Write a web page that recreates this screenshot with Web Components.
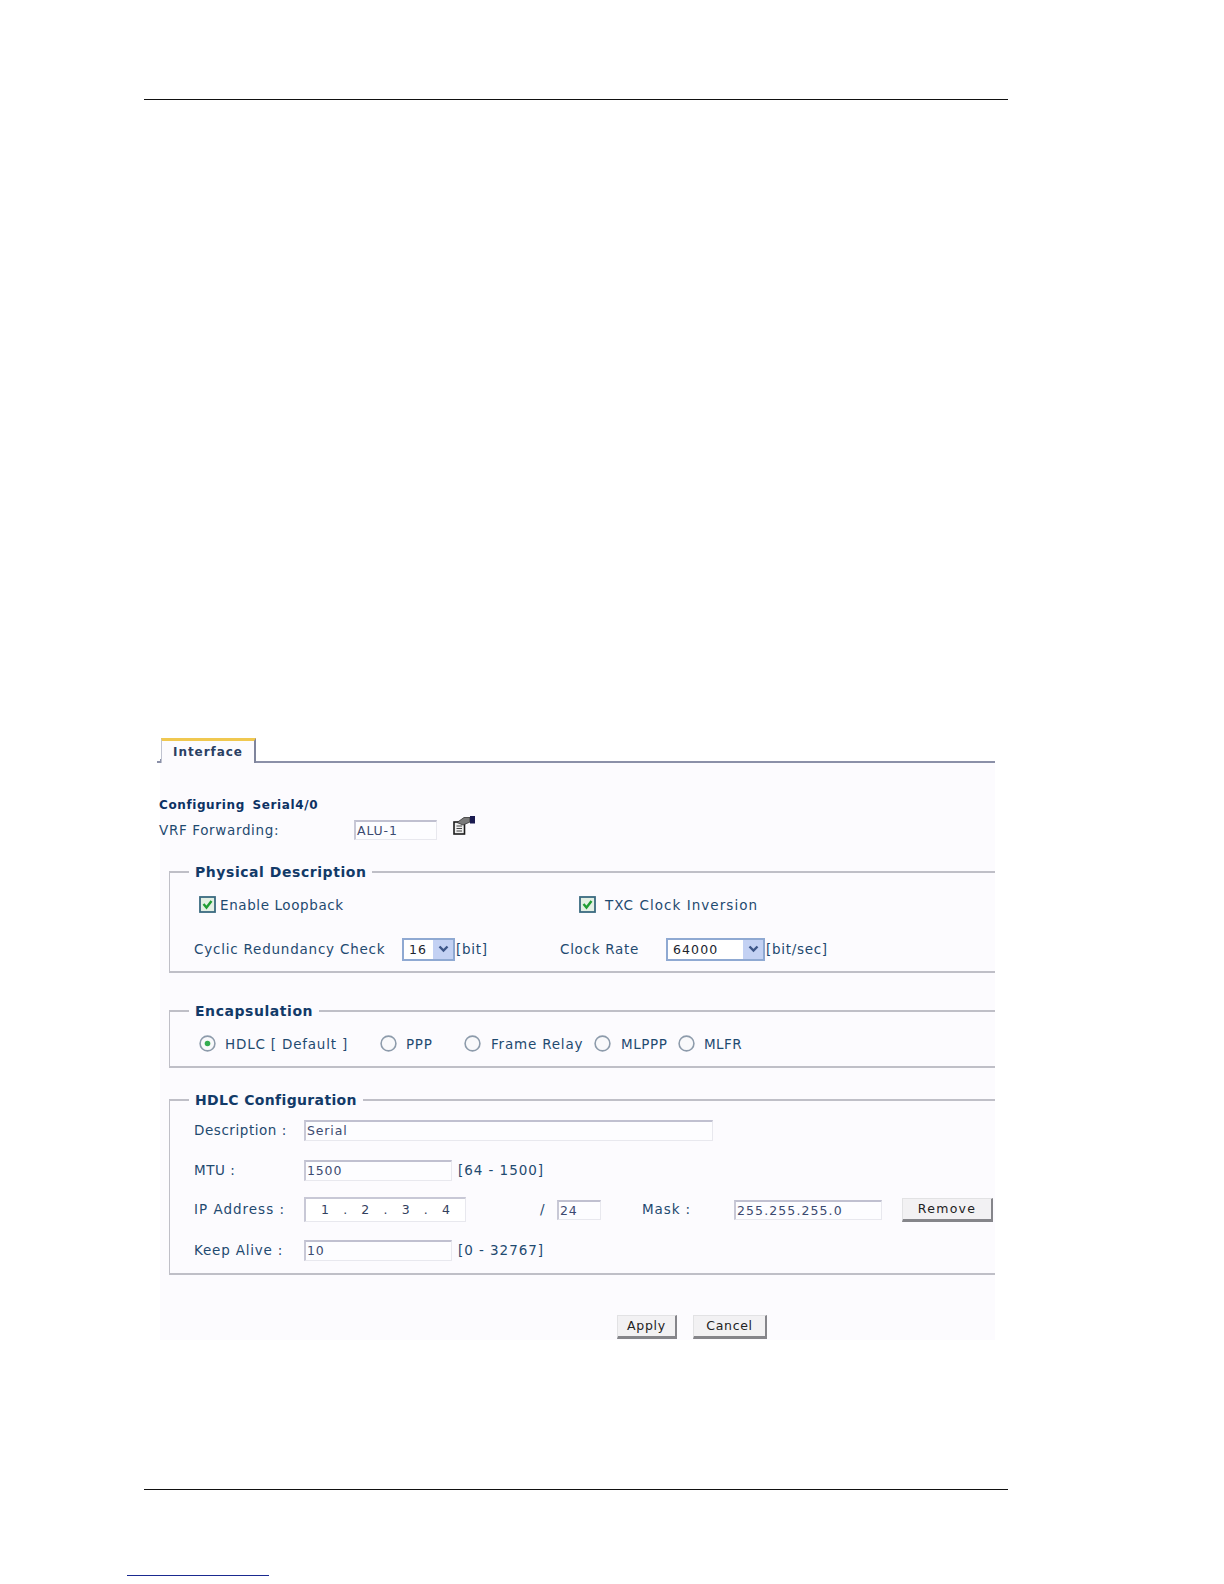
<!DOCTYPE html>
<html>
<head>
<meta charset="utf-8">
<title>Interface</title>
<style>
  html, body { margin: 0; background: #fff; }
  body { font-family: "DejaVu Sans", sans-serif; font-size: 13.5px; color: #1f4a70; }
</style>
</head>
<body>
<doc-page>
  <config-panel>
    <tab-strip label="Interface" slot="tabs"></tab-strip>
    <div style="font-size:12px;font-weight:bold;color:#0d3263;line-height:16px;margin:34px 0 0 -1px;letter-spacing:.6px;word-spacing:3px">Configuring Serial4/0</div>
    <form-row style="margin:5px 0 0 -1px;height:24px">
      <form-label width="195" style="letter-spacing:.65px">VRF Forwarding:</form-label>
      <text-box width="83" height="20">ALU-1</text-box>
      <vrf-icon style="margin:-10px 0 0 16px"></vrf-icon>
    </form-row>

    <form-section legend="Physical Description" pad="10" style="margin-top:20px">
      <form-row style="margin:11px 0 0 29px;height:26px">
        <check-box></check-box>
        <form-label width="359" style="margin-left:4px;letter-spacing:.6px">Enable Loopback</form-label>
        <check-box></check-box>
        <form-label style="margin-left:9px;letter-spacing:1.05px">TXC Clock Inversion</form-label>
      </form-row>
      <form-row style="margin:19px 0 0 24px;height:24px">
        <form-label width="208" style="letter-spacing:.78px">Cyclic Redundancy Check</form-label>
        <select-box width="53">16</select-box>
        <form-label width="104" style="margin-left:1px">[bit]</form-label>
        <form-label width="106" style="letter-spacing:.7px">Clock Rate</form-label>
        <select-box width="99">64000</select-box>
        <form-label style="margin-left:1px">[bit/sec]</form-label>
      </form-row>
    </form-section>

    <form-section legend="Encapsulation" pad="10" style="margin-top:28px">
      <form-row style="margin:12px 0 0 29px;height:24px">
        <radio-box checked></radio-box>
        <form-label width="155" style="margin-left:9px;letter-spacing:.8px">HDLC [ Default ]</form-label>
        <radio-box></radio-box>
        <form-label width="58" style="margin-left:9px">PPP</form-label>
        <radio-box></radio-box>
        <form-label width="103" style="margin-left:10px;letter-spacing:.8px">Frame Relay</form-label>
        <radio-box></radio-box>
        <form-label width="57" style="margin-left:10px;letter-spacing:.55px">MLPPP</form-label>
        <radio-box></radio-box>
        <form-label style="margin-left:9px;letter-spacing:.4px">MLFR</form-label>
      </form-row>
    </form-section>

    <form-section legend="HDLC Configuration" pad="12" legend-spacing=".35" style="margin-top:22px">
      <form-row style="margin:10px 0 0 24px;height:22px">
        <form-label width="110" style="letter-spacing:.55px">Description :</form-label>
        <text-box width="409" height="21">Serial</text-box>
      </form-row>
      <form-row style="margin:18px 0 0 24px;height:22px">
        <form-label width="110" style="letter-spacing:.55px">MTU :</form-label>
        <text-box width="148" height="21">1500</text-box>
        <form-label style="margin-left:6px;letter-spacing:.95px">[64 - 1500]</form-label>
      </form-row>
      <form-row style="margin:15px 0 0 24px;height:26px">
        <form-label width="110" style="letter-spacing:1px">IP Address :</form-label>
        <ip-box></ip-box>
        <form-label width="17" style="margin-left:74px">/</form-label>
        <text-box width="44" height="20" style="margin-top:2px">24</text-box>
        <form-label width="92" style="margin-left:41px;letter-spacing:.9px">Mask :</form-label>
        <text-box width="148" height="20" style="margin-top:2px;letter-spacing:1.1px">255.255.255.0</text-box>
        <push-button width="91" style="margin:2px 0 0 20px;letter-spacing:1.3px">Remove</push-button>
      </form-row>
      <form-row style="margin:17px 0 0 24px;height:22px">
        <form-label width="110" style="letter-spacing:.8px">Keep Alive :</form-label>
        <text-box width="148" height="21">10</text-box>
        <form-label style="margin-left:6px;letter-spacing:.95px">[0 - 32767]</form-label>
      </form-row>
    </form-section>

    <form-row style="margin:40px 0 0 457px;height:24px">
      <push-button width="60">Apply</push-button>
      <push-button width="74" style="margin-left:16px">Cancel</push-button>
    </form-row>
  </config-panel>
</doc-page>

<script>
function define(name, css, html, attrs) {
  customElements.define(name, class extends HTMLElement {
    connectedCallback() {
      if (this.shadowRoot) return;
      this.attachShadow({ mode: 'open' });
      const a = {};
      for (const k of attrs || []) a[k] = this.getAttribute(k);
      this.shadowRoot.innerHTML = `<style>${typeof css === 'function' ? css(a) : css}</style>` +
        (typeof html === 'function' ? html(a) : html);
    }
  });
}

define('doc-page', `
  :host { display: block; width: 864px; margin-left: 144px; }
  .rule { height: 1px; background: #111; }
  .top { margin-top: 99px; }
  .main { margin: 637px 0 0 16px; }
  .bottom { margin-top: 149px; }
  .link { width: 142px; height: 1px; background: #1a2a90; margin: 85px 0 0 -17px; }
  .top, .link { position: static; }
  .wrap { display: flow-root; }
`, `
  <div class="wrap">
    <div class="rule top"></div>
    <div class="main"><slot></slot></div>
    <div class="rule bottom"></div>
    <div class="link"></div>
  </div>
`);

define('config-panel', `
  :host { display: block; width: 835px; height: 603px; background: #fcfbfe; }
`, `<slot name="tabs"></slot><slot></slot>`);

define('tab-strip', `
  :host { display: flex; height: 26px; margin-left: -3px; align-items: flex-end; background: #fff; }
  .lead { width: 4px; height: 4px; border-bottom: 2px solid #8b90a8; border-right: 1px solid #8b90a8; box-sizing: border-box; flex: none; }
  .tab { flex: none; width: 95px; height: 25px; box-sizing: border-box;
    border-top: 3px solid #f0c850; border-left: 1px solid #c0c3d0; border-right: 2px solid #7f849c;
    padding-left: 11px; font: bold 12px/22px "DejaVu Sans", sans-serif; color: #2a3f63; letter-spacing: .95px; background: #fcfbfe; }
  .line { flex: 1; border-bottom: 2px solid #8b90a8; }
`, a => `<div class="lead"></div><div class="tab">${a.label}</div><div class="line"></div>`, ['label']);

define('form-row', `:host { display: flex; align-items: center; }`, `<slot></slot>`);

define('form-label', a => `
  :host { display: block; white-space: nowrap; letter-spacing: .7px; line-height: 18px; flex: none; ${a.width ? `width:${a.width}px;` : ''} }
`, `<slot></slot>`, ['width']);

define('form-section', a => `
  :host { display: block; margin-left: 9px; width: 826px; }
  fieldset { margin: 0; padding: 0 0 ${a.pad}px; border: solid #bfbfc7; border-width: 2px 0 2px 1px; min-width: 0; }
  legend { margin-left: 19px; padding: 2px 6px 0; font: bold 14px/17px "DejaVu Sans", sans-serif; color: #123a68;
    letter-spacing: ${a['legend-spacing'] || '.55'}px; white-space: nowrap; }
`, a => `<fieldset><legend>${a.legend}</legend><slot></slot></fieldset>`, ['legend', 'pad', 'legend-spacing']);

define('text-box', a => `
  :host { display: block; flex: none; box-sizing: border-box; width: ${a.width}px; height: ${a.height}px;
    border: 1px solid #e8e8ee; border-top: 2px solid #c0c0d0; border-left: 2px solid #c8c8d6; background: #fdfdff;
    padding-left: 1px; font-size: 12.5px; line-height: 17px; color: #3c4a70; letter-spacing: .85px; white-space: nowrap; overflow: hidden; }
`, `<slot></slot>`, ['width', 'height']);

define('select-box', a => `
  :host { display: flex; flex: none; box-sizing: border-box; width: ${a.width}px; height: 23px;
    border: 2px solid #8fa9d2; background: #fff; align-items: center; font-size: 12.5px; color: #20242e; letter-spacing: 1.1px; }
  .v { flex: 1; padding-left: 5px; }
  .b { width: 20px; height: 19px; background: #c3d1f3; display: flex; align-items: center; justify-content: center; }
`, `<div class="v"><slot></slot></div><div class="b"><svg width="11" height="8" viewBox="0 0 11 8"><path d="M1.5 1.5 5.5 5.5 9.5 1.5" fill="none" stroke="#3d5688" stroke-width="2.4"/></svg></div>`, ['width']);

define('check-box', `
  :host { display: block; flex: none; width: 17px; height: 17px; margin-top: -2px; }
  svg { display: block; }
`, `<svg width="17" height="17" viewBox="0 0 17 17"><rect x="1" y="1" width="15" height="15" fill="#e3f0e4" stroke="#3a6a80" stroke-width="1.8"/><path d="M4.5 8 7.5 11.5 12.5 5" fill="none" stroke="#1f9e34" stroke-width="2.4"/></svg>`);

define('radio-box', `
  :host { display: block; flex: none; width: 17px; height: 17px; margin-top: -2px; }
  svg { display: block; }
`, a => `<svg width="17" height="17" viewBox="0 0 17 17"><circle cx="8.5" cy="8.5" r="7.4" fill="#f9f9fb" stroke="#8d9bab" stroke-width="1.6"/>${a.checked !== null ? '<circle cx="8.5" cy="8.5" r="2.8" fill="#35ad50"/>' : ''}</svg>`, ['checked']);

define('vrf-icon', `
  :host { display: block; flex: none; width: 22px; height: 19px; }
  svg { display: block; }
`, `<svg width="22" height="19" viewBox="0 0 22 19">
  <rect x="1" y="6" width="10.5" height="12" fill="#eee" stroke="#1c1c1c" stroke-width="1.6"/>
  <path d="M3.5 10h5.5M3.5 12.5h5.5M3.5 15h5.5" stroke="#444" stroke-width="1"/>
  <path d="M4 6.5 11 1.5 17 1.5 17 6 10 9Z" fill="#7a7a7a" stroke="#333" stroke-width=".8"/>
  <rect x="17" y="0" width="5" height="7.5" fill="#1a1a50"/>
</svg>`);

define('ip-box', `
  :host { display: flex; flex: none; box-sizing: border-box; width: 162px; height: 25px; justify-content: space-between;
    border: 1px solid #e8e8ee; border-top: 2px solid #c8c8d6; border-left: 2px solid #c8c8d6; background: #fff;
    padding: 0 15px; font-size: 12.5px; line-height: 20px; color: #33405e; align-items: center; }
`, `<span>1</span><span>.</span><span>2</span><span>.</span><span>3</span><span>.</span><span>4</span>`);

define('push-button', a => `
  :host { display: block; flex: none; box-sizing: border-box; width: ${a.width}px; height: 24px;
    background: #f2f1f3; border: 1px solid #e2e2e4; border-right: 2px solid #85858a; border-bottom: 3px solid #85858a;
    text-align: center; font-size: 12.5px; line-height: 20px; color: #222; letter-spacing: .7px; }
`, `<slot></slot>`, ['width']);
</script>
</body>
</html>
